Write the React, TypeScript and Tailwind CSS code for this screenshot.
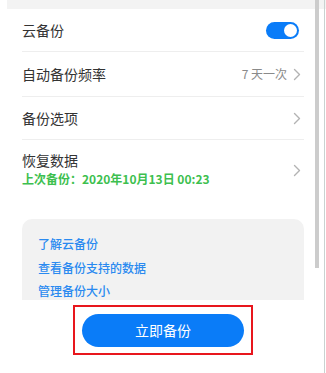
import React from 'react';

const Chevron: React.FC = () => (
  <svg width="8" height="13" viewBox="0 0 8 13" fill="none" className="shrink-0">
    <path d="M1.5 1.5 L6.5 6.5 L1.5 11.5" stroke="#b3b3b3" strokeWidth="1.4" strokeLinecap="round" strokeLinejoin="round" />
  </svg>
);

const App: React.FC = () => {
  return (
    <div
      className="relative w-[326px] h-[373px] overflow-hidden bg-white"
      style={{ fontFamily: '"Noto Sans CJK SC", "Noto Sans", sans-serif' }}
    >
      {/* top strip */}
      <div className="h-[9px] ml-[7px] bg-[#f3f3f3]"></div>

      <div className="px-[22px]">
        {/* cloud backup toggle */}
        <div className="h-[43px] flex items-center justify-between border-b border-[#eeeeee]">
          <span className="text-[14px] text-[#333333]">云备份</span>
          <div className="w-[33px] h-[17px] rounded-full bg-[#0a7cf8] flex items-center justify-end pr-[2px] mr-[5px]">
            <div className="w-[13px] h-[13px] rounded-full bg-white"></div>
          </div>
        </div>

        {/* frequency */}
        <div className="h-[45px] flex items-center justify-between border-b border-[#eeeeee]">
          <span className="text-[14px] text-[#333333]">自动备份频率</span>
          <div className="flex items-center gap-[6px] pr-[3px]">
            <span className="text-[12px] text-[#8a8a8a]">7 天一次</span>
            <Chevron />
          </div>
        </div>

        {/* options */}
        <div className="h-[43px] flex items-center justify-between border-b border-[#eeeeee]">
          <span className="text-[14px] text-[#333333]">备份选项</span>
          <div className="pr-[3px]">
            <Chevron />
          </div>
        </div>

        {/* restore */}
        <div className="h-[60px] flex items-center justify-between">
          <div className="flex flex-col -mt-[2px]">
            <span className="text-[14px] leading-[19px] text-[#333333]">恢复数据</span>
            <span className="text-[12px] leading-[18px] font-semibold text-[#3dbf4f]">上次备份：2020年10月13日 00:23</span>
          </div>
          <div className="pr-[3px]">
            <Chevron />
          </div>
        </div>

        {/* help links */}
        <div className="mt-[19px] h-[81px] bg-[#f2f2f2] rounded-t-[10px] pt-[13px] pl-[16px] flex flex-col">
          <span className="text-[12px] leading-[24px] font-medium text-[#2a8af0]">了解云备份</span>
          <span className="text-[12px] leading-[24px] font-medium text-[#2a8af0]">查看备份支持的数据</span>
          <span className="text-[12px] leading-[22px] font-medium text-[#2a8af0]">管理备份大小</span>
        </div>
      </div>

      {/* action */}
      <div className="mt-[5px] ml-[73px] w-[180px] h-[50px] border-2 border-[#e8161d] flex items-center justify-center">
        <button className="w-[162px] h-[33px] rounded-full bg-[#0a7cf8] text-white text-[14px]">
          立即备份
        </button>
      </div>

      {/* scrollbar */}
      <div className="absolute top-0 left-[315px] w-[4px] h-[268px] bg-[#cccccc]"></div>
      <div className="absolute top-0 left-[324px] w-px h-full bg-[#c9d2d0]"></div>
    </div>
  );
};

export default App;
